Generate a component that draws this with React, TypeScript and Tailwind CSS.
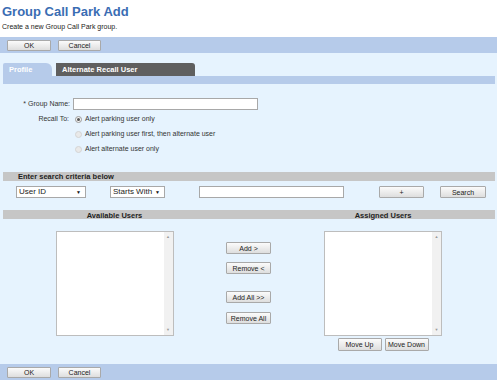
import { FC, ReactNode } from "react";

const Btn: FC<{ w: string; children: ReactNode; h?: string }> = ({ w, children, h = "h-[11px]" }) => (
    <button className={`${w} ${h} flex items-center justify-center border border-[#a9a9a9] rounded-[1px] bg-gradient-to-b from-[#fbfbfb] to-[#dedede] text-[7px] leading-none text-[#222]`}>
        {children}
    </button>
);

const Radio: FC<{ checked?: boolean; label: string }> = ({ checked = false, label }) => (
    <div className="flex items-center h-[15px]">
        <span className={`w-[7px] h-[7px] rounded-full border flex items-center justify-center ${checked ? "border-[#9a9a9a] bg-[#f4f4f4]" : "border-[#d4d4d4] bg-[#e9e9e9]"}`}>
            {checked && <span className="w-[3px] h-[3px] rounded-full bg-[#555]" />}
        </span>
        <span className="ml-[3px] text-[7px] text-[#333]">{label}</span>
    </div>
);

const Select: FC<{ w: string; label: string }> = ({ w, label }) => (
    <div className={`${w} h-[12px] bg-white border border-[#a8a8a8] flex items-center justify-between pl-[2px] pr-[4px]`}>
        <span className="text-[8px] leading-none text-[#222]">{label}</span>
        <span className="text-[5px] leading-none text-[#111]">▼</span>
    </div>
);

const ListBox: FC = () => (
    <div className="w-[118px] h-[105px] bg-white border border-[#bdbdbd] flex justify-end">
        <div className="w-[9px] h-full bg-[#f1f1f1] flex flex-col items-center justify-between py-[3px]">
            <span className="text-[4px] leading-none text-[#999]">▲</span>
            <span className="text-[4px] leading-none text-[#999]">▼</span>
        </div>
    </div>
);

const ActionBar: FC = () => (
    <div className="h-[16px] bg-[#b6cbea] flex items-center pl-[7px] gap-[7px]">
        <Btn w="w-[44px]">OK</Btn>
        <Btn w="w-[43px]">Cancel</Btn>
    </div>
);

const App: FC = () => {
    return (
        <div className="w-[497px] font-['Liberation_Sans',Arial,sans-serif] bg-white">
            <div className="pl-[2px] pt-[4px]">
                <h1 className="text-[13px] leading-[16px] font-bold text-[#3a6db3]">Group Call Park Add</h1>
                <p className="mt-[2px] text-[7px] leading-[9px] text-[#222]">Create a new Group Call Park group.</p>
            </div>
            <div className="mt-[6px]">
                <ActionBar />
            </div>
            <div className="bg-[#e6f3fe] pt-[10px] pb-[13px]">
                <div className="flex items-end pl-[3px] gap-[4px]">
                    <div className="w-[49px] h-[13px] bg-[#b6cbea] rounded-tr-[6px] rounded-tl-[2px] text-[7.5px] font-bold text-white flex items-center pl-[6px]">Profile</div>
                    <div className="w-[139px] h-[13px] bg-[#5f5f5f] rounded-tr-[3px] text-[7.5px] font-bold text-white flex items-center pl-[6px]">Alternate Recall User</div>
                </div>
                <div className="ml-[3px] mr-[2px] h-[8px] bg-[#b6cbea]" />

                <div className="mt-[14px] flex items-center h-[12px]">
                    <span className="w-[70px] text-right text-[7px] text-[#333]">* Group Name:</span>
                    <div className="ml-[3px] w-[185px] h-[12px] bg-white border border-[#a8a8a8]" />
                </div>
                <div className="mt-[2px] flex">
                    <span className="w-[69px] h-[15px] flex items-center justify-end text-[7px] text-[#333]">Recall To:</span>
                    <div className="ml-[6px] flex flex-col">
                        <Radio checked label="Alert parking user only" />
                        <Radio label="Alert parking user first, then alternate user" />
                        <Radio label="Alert alternate user only" />
                    </div>
                </div>

                <div className="mt-[15px] ml-[3px] mr-[2px] h-[9px] bg-[#c6c6c6] flex items-center pl-[15px] text-[7.5px] font-bold text-[#222]">
                    Enter search criteria below
                </div>
                <div className="mt-[5px] flex items-center h-[12px]">
                    <div className="ml-[16px]"><Select w="w-[70px]" label="User ID" /></div>
                    <div className="ml-[24px]"><Select w="w-[55px]" label="Starts With" /></div>
                    <div className="ml-[34px] w-[145px] h-[12px] bg-white border border-[#a8a8a8]" />
                    <div className="ml-[35px]"><Btn w="w-[45px]" h="h-[12px]">+</Btn></div>
                    <div className="ml-[16px]"><Btn w="w-[46px]" h="h-[12px]">Search</Btn></div>
                </div>

                <div className="mt-[12px] ml-[3px] mr-[2px] h-[9px] bg-[#c6c6c6] grid grid-cols-[223px_45px_1fr] items-center text-[7.5px] font-bold text-[#222]">
                    <span className="text-center">Available Users</span>
                    <span />
                    <span className="text-center">Assigned Users</span>
                </div>
                <div className="mt-[12px] ml-[3px] mr-[2px] grid grid-cols-[223px_45px_1fr]">
                    <div className="flex justify-center"><ListBox /></div>
                    <div className="flex flex-col pt-[11px]">
                        <Btn w="w-[45px]" h="h-[12px]">Add &gt;</Btn>
                        <div className="mt-[8px]"><Btn w="w-[45px]" h="h-[12px]">Remove &lt;</Btn></div>
                        <div className="mt-[17px]"><Btn w="w-[45px]" h="h-[12px]">Add All &gt;&gt;</Btn></div>
                        <div className="mt-[9px]"><Btn w="w-[45px]" h="h-[12px]">Remove All</Btn></div>
                    </div>
                    <div className="flex flex-col items-center">
                        <ListBox />
                        <div className="mt-[2px] flex gap-[3px]">
                            <Btn w="w-[44px]" h="h-[13px]">Move Up</Btn>
                            <Btn w="w-[44px]" h="h-[13px]">Move Down</Btn>
                        </div>
                    </div>
                </div>
            </div>
            <ActionBar />
        </div>
    );
};

export default App;
